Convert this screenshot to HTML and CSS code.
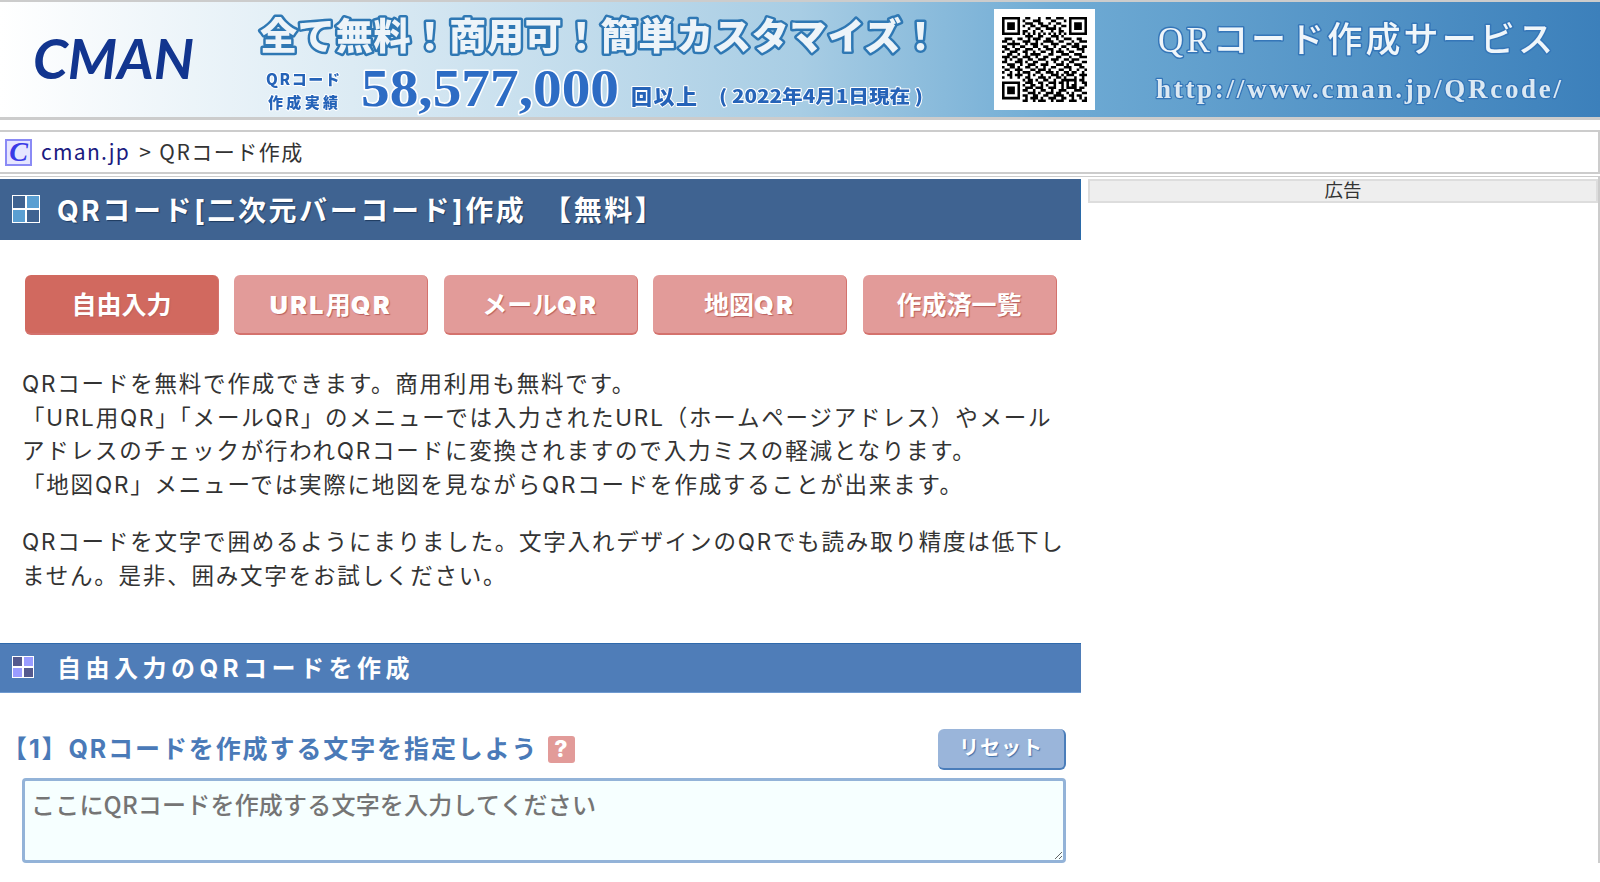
FILE: index.html
```html
<!DOCTYPE html>
<html lang="ja">
<head>
  <meta charset="UTF-8">
  <meta name="viewport" content="width=device-width, initial-scale=1.0">
  <title>QRコード作成 - cman.jp</title>
  <link rel="stylesheet" href="styles.css">
</head>
<body>
  <div class="banner">
    <svg class="banner-art" viewBox="0 2 1600 115" width="1600" height="115">
      <g class="soft">
        <text class="logo" x="33" y="79" textLength="161" lengthAdjust="spacingAndGlyphs">CMAN</text>
        <text class="catch" x="260" y="50" textLength="679">全て無料！商用可！簡単カスタマイズ！</text>
        <text class="small" x="266" y="85" textLength="74">QRコード</text>
        <text class="small" x="268" y="108" textLength="70">作成実績</text>
        <text class="count" x="361" y="106" textLength="258" lengthAdjust="spacingAndGlyphs">58,577,000</text>
        <text class="unit" x="631" y="104" textLength="66">回以上</text>
        <text class="date" x="719" y="103" textLength="204" lengthAdjust="spacingAndGlyphs">( 2022年4月1日現在 )</text>
        <text class="service" x="1158" y="52" textLength="395">QRコード作成サービス</text>
        <text class="url" x="1156" y="98" textLength="405">http://www.cman.jp/QRcode/</text>
      </g>
      <rect x="994" y="9" width="101" height="101" fill="#fff"/>
      <svg x="1002" y="17" width="85" height="85" viewBox="0 0 33 33">
        <path class="qr" d="M0 .5h7M9 .5h2M14 .5h1M17 .5h2M21 .5h3M26 .5h7
          M0 1.5h1M6 1.5h1M8 1.5h1M12 1.5h3M19 1.5h2M24 1.5h1M26 1.5h1M32 1.5h1
          M0 2.5h1M2 2.5h3M6 2.5h1M9 2.5h3M14 2.5h2M18 2.5h1M21 2.5h2M26 2.5h1M28 2.5h3M32 2.5h1
          M0 3.5h1M2 3.5h3M6 3.5h1M8 3.5h1M11 3.5h2M15 3.5h3M20 3.5h1M23 3.5h2M26 3.5h1M28 3.5h3M32 3.5h1
          M0 4.5h1M2 4.5h3M6 4.5h1M10 4.5h1M13 4.5h2M17 4.5h4M22 4.5h1M26 4.5h1M28 4.5h3M32 4.5h1
          M0 5.5h1M6 5.5h1M8 5.5h2M12 5.5h1M15 5.5h1M19 5.5h1M22 5.5h2M26 5.5h1M32 5.5h1
          M0 6.5h7M8 6.5h1M10 6.5h1M12 6.5h1M14 6.5h1M16 6.5h1M18 6.5h1M20 6.5h1M22 6.5h1M24 6.5h1M26 6.5h7
          M9 7.5h3M14 7.5h2M19 7.5h3M23 7.5h1
          M1 8.5h3M6 8.5h2M10 8.5h1M12 8.5h3M17 8.5h2M21 8.5h1M24 8.5h3M29 8.5h2
          M0 9.5h2M4 9.5h1M8 9.5h3M13 9.5h1M16 9.5h4M22 9.5h2M27 9.5h1M30 9.5h3
          M2 10.5h4M6 10.5h1M9 10.5h1M11 10.5h3M15 10.5h1M19 10.5h3M25 10.5h2M28 10.5h2
          M0 11.5h2M4 11.5h1M7 11.5h2M12 11.5h2M16 11.5h2M20 11.5h1M23 11.5h2M27 11.5h3M31 11.5h2
          M1 12.5h2M5 12.5h2M9 12.5h3M14 12.5h1M17 12.5h3M22 12.5h1M25 12.5h1M29 12.5h3
          M0 13.5h1M3 13.5h3M8 13.5h2M12 13.5h1M15 13.5h2M19 13.5h1M21 13.5h3M26 13.5h2M31 13.5h1
          M2 14.5h2M6 14.5h1M9 14.5h1M11 14.5h4M18 14.5h2M23 14.5h3M28 14.5h3
          M0 15.5h3M4 15.5h2M8 15.5h3M13 15.5h1M16 15.5h2M21 15.5h2M26 15.5h1M30 15.5h3
          M1 16.5h1M3 16.5h1M6 16.5h2M10 16.5h2M14 16.5h3M19 16.5h3M24 16.5h2M27 16.5h3
          M0 17.5h2M5 17.5h3M9 17.5h1M12 17.5h2M17 17.5h1M20 17.5h1M23 17.5h1M26 17.5h2M31 17.5h2
          M2 18.5h3M7 18.5h1M10 18.5h3M15 18.5h3M21 18.5h3M25 18.5h1M28 18.5h3
          M0 19.5h1M3 19.5h2M6 19.5h1M9 19.5h2M13 19.5h1M16 19.5h1M19 19.5h2M24 19.5h3M30 19.5h2
          M1 20.5h2M5 20.5h3M11 20.5h2M14 20.5h3M18 20.5h1M22 20.5h2M26 20.5h1M29 20.5h1M32 20.5h1
          M0 21.5h1M3 21.5h1M6 21.5h1M8 21.5h3M13 21.5h2M17 21.5h3M21 21.5h1M24 21.5h2M27 21.5h2M31 21.5h1
          M2 22.5h2M5 22.5h3M10 22.5h1M12 22.5h1M15 22.5h1M19 22.5h3M23 22.5h1M25 22.5h3M30 22.5h3
          M0 23.5h1M3 23.5h1M6 23.5h1M9 23.5h2M14 23.5h3M18 23.5h1M21 23.5h2M24 23.5h1M28 23.5h1M31 23.5h1
          M8 24.5h1M10 24.5h2M13 24.5h1M16 24.5h2M20 24.5h1M23 24.5h6M30 24.5h2
          M0 25.5h7M9 25.5h3M14 25.5h2M18 25.5h3M22 25.5h2M25 25.5h1M28 25.5h1M31 25.5h2
          M0 26.5h1M6 26.5h1M8 26.5h1M11 26.5h2M15 26.5h1M17 26.5h1M20 26.5h1M23 26.5h1M25 26.5h1M27 26.5h2M32 26.5h1
          M0 27.5h1M2 27.5h3M6 27.5h1M9 27.5h3M13 27.5h3M18 27.5h3M23 27.5h1M25 27.5h4M30 27.5h2
          M0 28.5h1M2 28.5h3M6 28.5h1M8 28.5h2M12 28.5h1M15 28.5h2M19 28.5h1M22 28.5h3M28 28.5h3
          M0 29.5h1M2 29.5h3M6 29.5h1M10 29.5h3M14 29.5h1M17 29.5h3M21 29.5h2M25 29.5h1M27 29.5h1M31 29.5h2
          M0 30.5h1M6 30.5h1M8 30.5h2M12 30.5h2M16 30.5h2M20 30.5h4M26 30.5h2M29 30.5h2
          M0 31.5h7M9 31.5h1M11 31.5h3M15 31.5h1M18 31.5h3M23 31.5h2M27 31.5h1M30 31.5h1M32 31.5h1
          M8 32.5h2M12 32.5h1M14 32.5h3M19 32.5h1M21 32.5h3M26 32.5h3M31 32.5h2"/>
      </svg>
    </svg>
  </div>

  <div class="crumb">
    <span class="crumb-icon">C</span>
    <a href="#">cman.jp</a>
    <span class="crumb-sep">&gt;</span>
    <span>QRコード作成</span>
  </div>

  <div class="page">
    <main class="content">
      <h1 class="title-bar">
        <span class="pane-icon">
          <i class="pane-dark"></i><i class="pane-light"></i><i class="pane-light"></i><i class="pane-dark"></i>
        </span>
        QRコード[二次元バーコード]作成　【無料】
      </h1>

      <nav class="tabs">
        <a class="tab active" href="#">自由入力</a>
        <a class="tab" href="#"><span><b>URL</b>用<b>QR</b></span></a>
        <a class="tab" href="#"><span>メール<b>QR</b></span></a>
        <a class="tab" href="#"><span>地図<b>QR</b></span></a>
        <a class="tab" href="#">作成済一覧</a>
      </nav>

      <div class="intro">
        <p>QRコードを無料で作成できます。商用利用も無料です。<br>
        「URL用QR」「メールQR」のメニューでは入力されたURL（ホームページアドレス）やメールアドレスのチェックが行われQRコードに変換されますので入力ミスの軽減となります。<br>
        「地図QR」メニューでは実際に地図を見ながらQRコードを作成することが出来ます。</p>
        <p>QRコードを文字で囲めるようにまりました。文字入れデザインのQRでも読み取り精度は低下しません。是非、囲み文字をお試しください。</p>
      </div>

      <h2 class="section-bar">
        <span class="pane-icon small-pane">
          <i class="pane-navy"></i><i class="pane-violet"></i><i class="pane-violet"></i><i class="pane-navy"></i>
        </span>
        自由入力のQRコードを作成
      </h2>

      <div class="step-head">
        <h3 class="step-title">【1】QRコードを作成する文字を指定しよう</h3>
        <span class="help">?</span>
        <button class="reset" type="button">リセット</button>
      </div>
      <textarea class="qr-text" placeholder="ここにQRコードを作成する文字を入力してください"></textarea>
    </main>

    <aside class="side">
      <div class="ad-head">広告</div>
    </aside>
  </div>
</body>
</html>
```

FILE: styles.css
```css
* { box-sizing: border-box; }
html, body { height: 100%; }
body { margin: 0; overflow: hidden; background: #fff; color: #222; font-family: Inter, "Noto Sans CJK JP", "Noto Sans", sans-serif; }

.banner { height: 120px; border-top: 2px solid #ccc; border-bottom: 3px solid #ccc; background: linear-gradient(90deg, #fff 0%, #dcebf4 22%, #a8cde4 50%, #6fabd4 66%, #3c80bb 100%); }
.banner-art { display: block; }
.soft { filter: blur(0.5px); }
.banner text { font-family: "Noto Sans CJK JP", sans-serif; font-weight: 900; paint-order: stroke; stroke-linejoin: round; }
.banner .logo { font-family: Lato, "Liberation Sans", sans-serif; font-style: italic; font-weight: 700; font-size: 56px; fill: #12358f; }
.banner .catch { font-size: 37px; fill: #edf4f9; stroke: #2f78b4; stroke-width: 5px; }
.banner .small { font-size: 15px; fill: #2563b8; stroke: #fff; stroke-width: 2px; }
.banner .count { font-family: "Liberation Serif", serif; font-weight: 700; font-size: 53px; fill: #2d6cc4; stroke: #fff; stroke-width: 3px; }
.banner .unit { font-size: 21px; fill: #2563b8; stroke: #fff; stroke-width: 2px; }
.banner .date { font-size: 18px; fill: #2563b8; stroke: #fff; stroke-width: 2px; }
.banner .service { font-family: "Liberation Serif", "Noto Sans CJK JP", serif; font-weight: 500; font-size: 35px; fill: #f0f6fa; stroke: #3576b8; stroke-width: 3px; }
.banner .url { font-family: "Liberation Serif", serif; font-weight: 700; font-size: 27px; fill: #dce9f3; stroke: #3576b8; stroke-width: 2.5px; }
.qr { fill: none; stroke: #000; stroke-width: 1; }

.crumb { display: flex; align-items: center; gap: 9px; height: 44px; margin-top: 10px; padding: 0 0 2px 5px; border: 2px solid #ccc; border-left: 0; font-family: "Noto Sans CJK JP", sans-serif; font-size: 21px; letter-spacing: 1.5px; color: #333; }
.crumb a { color: #1a1a80; letter-spacing: 1.3px; text-decoration: none; }
.crumb-sep { margin-right: -2px; }
.crumb-icon { width: 27px; height: 27px; margin-top: 2px; display: flex; align-items: center; justify-content: center; background: #e6e6ff; border: 2px solid #8a8af5; color: #3a3ae6; font-family: "Liberation Serif", serif; font-style: italic; font-weight: 700; font-size: 28px; letter-spacing: 0; }

.page { display: flex; gap: 7px; margin-top: 2px; padding-top: 2px; border-top: 1px solid #ccc; border-right: 2px solid #ccc; }
.content { width: 1081px; flex: none; }
.side { flex: 1; }
.ad-head { height: 24px; line-height: 19px; text-align: center; font-size: 18.5px; background: #eee; border: 2px solid #ddd; color: #333; }

.pane-icon { width: 28px; height: 28px; flex: none; display: grid; grid-template-columns: 1fr 1fr; gap: 2px; padding: 1px; background: #fff; }
.small-pane { width: 22px; height: 22px; }
.pane-dark { background: #3f6391; }
.pane-light { background: #5a9fd2; }
.pane-navy { background: #555a8e; }
.pane-violet { background: #9a9cff; }

.title-bar { display: flex; align-items: center; gap: 17px; height: 61px; margin: 0; padding: 0 0 2px 12px; background: #3f6391; border-right: 1px solid #2b6aa8; color: #fff; font-size: 28px; font-weight: 700; letter-spacing: 2.6px; text-shadow: 1px 1px 1px #1f3a5f; }

.tabs { display: flex; gap: 15.4px; padding: 35px 0 0 25px; }
.tab { width: 194px; height: 60px; padding-bottom: 3px; display: flex; align-items: center; justify-content: center; background: #e29b99; border-radius: 6px; border-right: 1px solid #d4726d; border-bottom: 2px solid #d4726d; color: #fff; font-size: 25px; font-weight: 700; text-decoration: none; text-shadow: 1px 1px 1px #b9605c; }
.tab.active { background: #d1695f; }
.tab b { letter-spacing: 2.4px; }

.intro { padding: 32px 15px 0 22px; font-size: 22.5px; line-height: 33.7px; letter-spacing: 1.8px; color: #333; }
.intro p { margin: 0 0 23px; }

.section-bar { display: flex; align-items: center; gap: 23px; height: 50px; margin: 51px 0 0; padding: 0 0 3px 12px; background: #4f7db8; border-top: 1px solid #2f69ab; border-bottom: 1px solid #6f9ad0; color: #fff; font-size: 24px; font-weight: 700; letter-spacing: 4.5px; }

.step-head { display: flex; align-items: center; height: 44px; margin: 34px 15px 0 0; padding-left: 2px; }
.step-title { margin: 0 0 4px; color: #4a7ab8; font-size: 25px; font-weight: 700; letter-spacing: 1.9px; }
.help { width: 27px; height: 27px; margin-left: 9px; display: flex; align-items: center; justify-content: center; background: #e29b99; border-radius: 3px; color: #fff; font-size: 23px; font-weight: 800; }
.reset { width: 128px; height: 41px; margin-left: auto; padding: 0 0 3px; background: #9ab5da; border: 0; border-right: 2px solid #4a7dba; border-bottom: 2px solid #4a7dba; border-radius: 6px; color: #fff; font-family: inherit; font-size: 20px; font-weight: 700; letter-spacing: 1px; text-shadow: 1px 1px 1px #3f6fa8; }

.qr-text { display: block; width: 1044px; height: 85px; margin: 7px 0 0 22px; padding: 5px 6px; background: #f6ffff; border: 3px solid #93b3d8; border-radius: 4px; font-family: "Noto Sans CJK JP", sans-serif; font-size: 24px; font-weight: 500; letter-spacing: 0.2px; outline: none; }
```
